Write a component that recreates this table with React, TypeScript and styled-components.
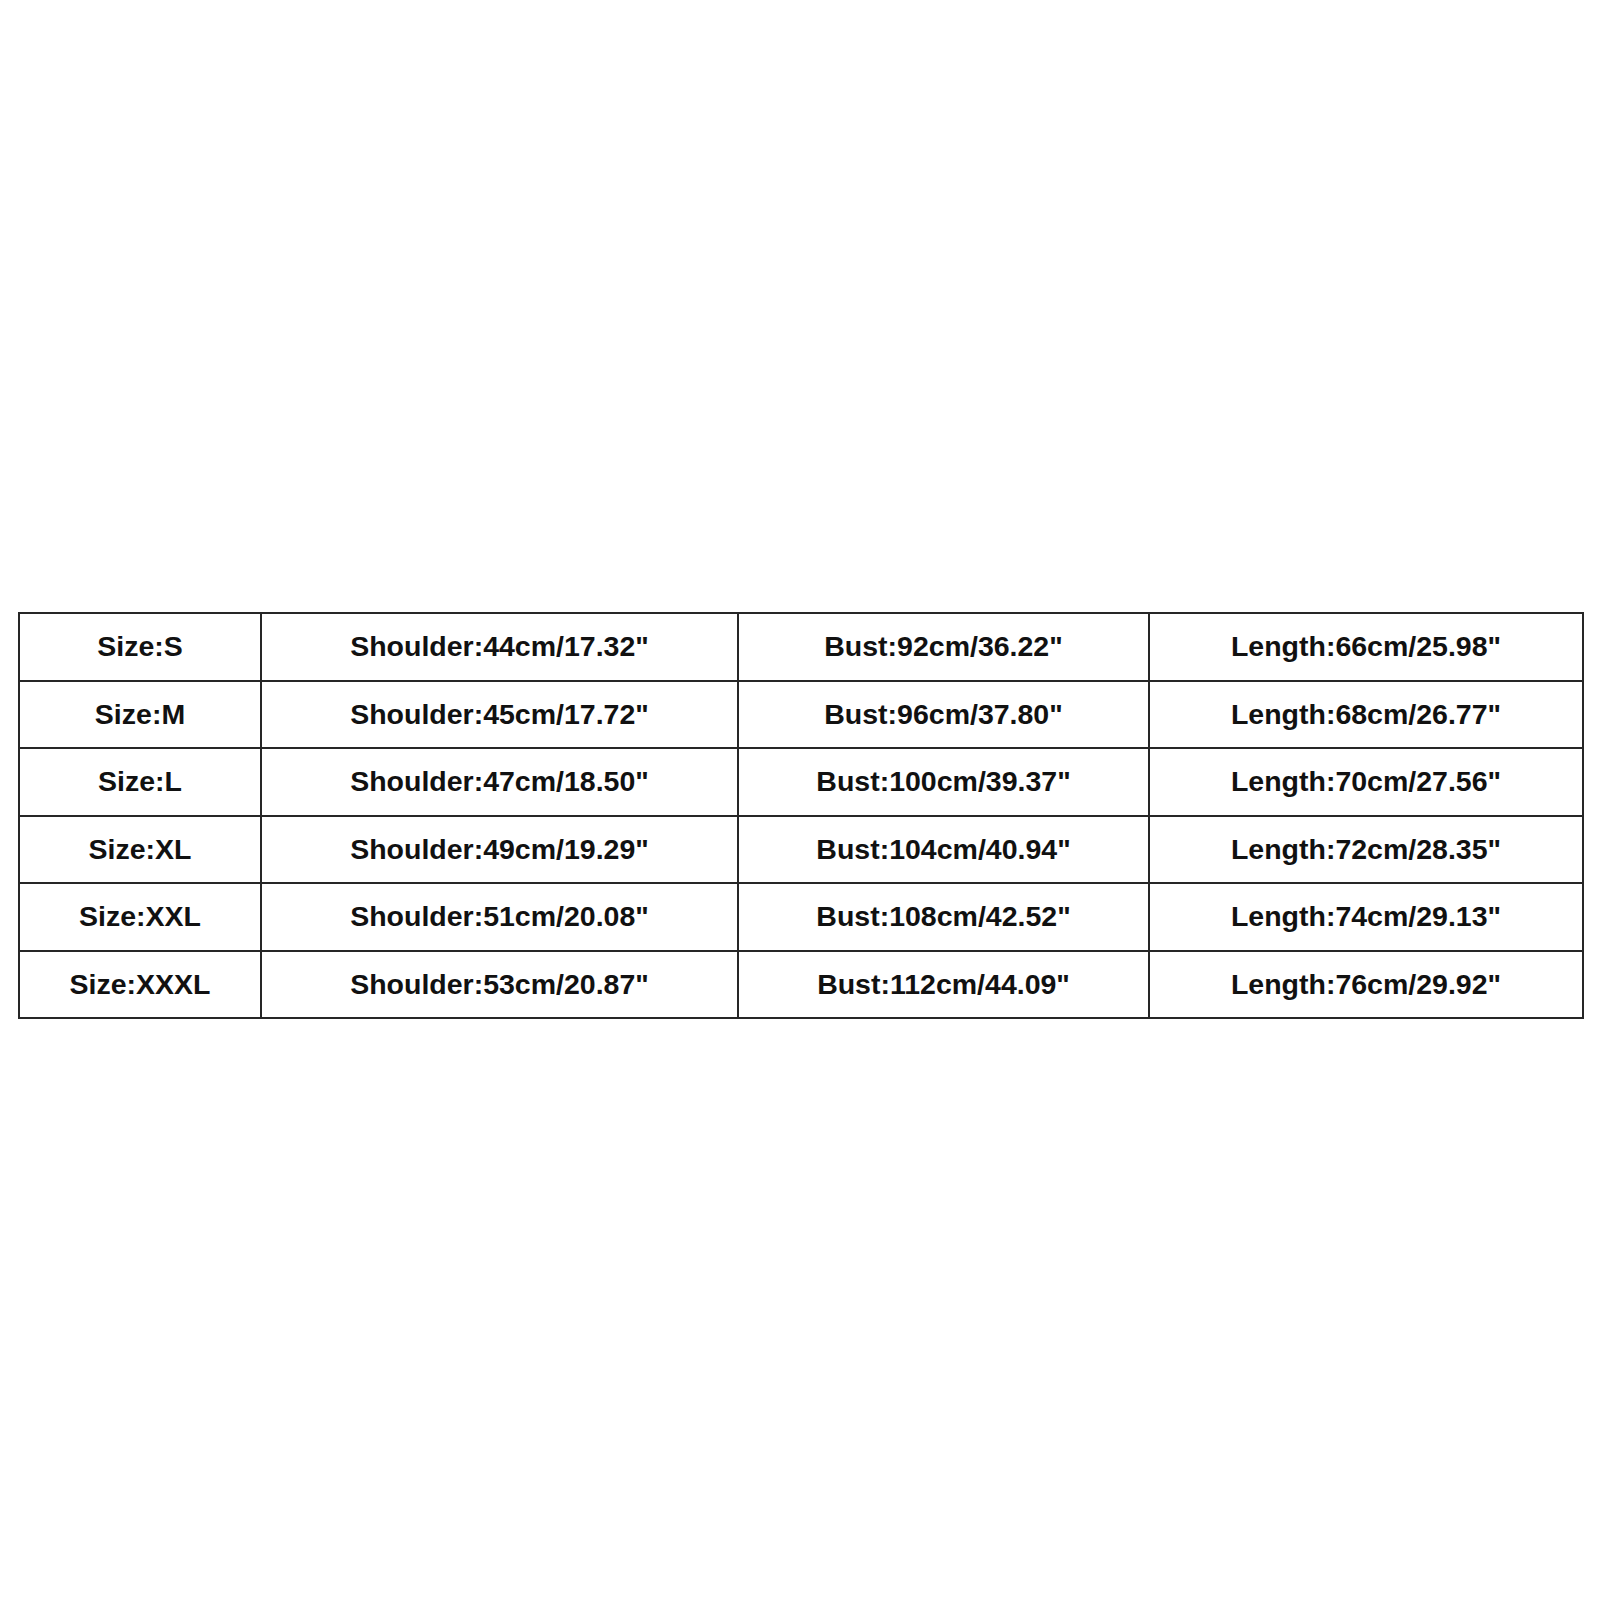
import styled, { createGlobalStyle } from 'styled-components';

const GlobalStyle = createGlobalStyle`
  html, body {
    margin: 0;
    padding: 0;
    background: #ffffff;
  }
  body {
    width: 1600px;
    min-height: 1600px;
    font-family: 'Liberation Sans', Arial, sans-serif;
  }
`;

const SIZES = [
  { size: 'S', shoulder: '44cm/17.32"', bust: '92cm/36.22"', length: '66cm/25.98"' },
  { size: 'M', shoulder: '45cm/17.72"', bust: '96cm/37.80"', length: '68cm/26.77"' },
  { size: 'L', shoulder: '47cm/18.50"', bust: '100cm/39.37"', length: '70cm/27.56"' },
  { size: 'XL', shoulder: '49cm/19.29"', bust: '104cm/40.94"', length: '72cm/28.35"' },
  { size: 'XXL', shoulder: '51cm/20.08"', bust: '108cm/42.52"', length: '74cm/29.13"' },
  { size: 'XXXL', shoulder: '53cm/20.87"', bust: '112cm/44.09"', length: '76cm/29.92"' },
];

const COLUMN_WIDTHS = [242, 477, 411, 434];

const App = () => {
  return (
    <Page>
      <GlobalStyle />
      <SizeTable>
        <colgroup>
          {COLUMN_WIDTHS.map((w, i) => (
            <col key={i} style={{ width: w }} />
          ))}
        </colgroup>
        <tbody>
          {SIZES.map((row) => (
            <Row key={row.size}>
              <Cell>Size:{row.size}</Cell>
              <Cell>Shoulder:{row.shoulder}</Cell>
              <Cell>Bust:{row.bust}</Cell>
              <Cell>Length:{row.length}</Cell>
            </Row>
          ))}
        </tbody>
      </SizeTable>
    </Page>
  );
};

export default App;

const Page = styled.div`
  width: 1600px;
  height: 1600px;
  padding: 612px 0 0 18px;
  box-sizing: border-box;
`;

const SizeTable = styled.table`
  width: 1564px;
  border-collapse: collapse;
  table-layout: fixed;
  border: 2px solid #262626;
`;

const Row = styled.tr`
  height: 67.5px;
`;

const Cell = styled.td`
  border: 2px solid #262626;
  padding: 0;
  text-align: center;
  vertical-align: middle;
  font-family: 'Liberation Sans', Arial, sans-serif;
  font-weight: 700;
  font-size: 28.5px;
  color: #111111;
  white-space: nowrap;
`;
